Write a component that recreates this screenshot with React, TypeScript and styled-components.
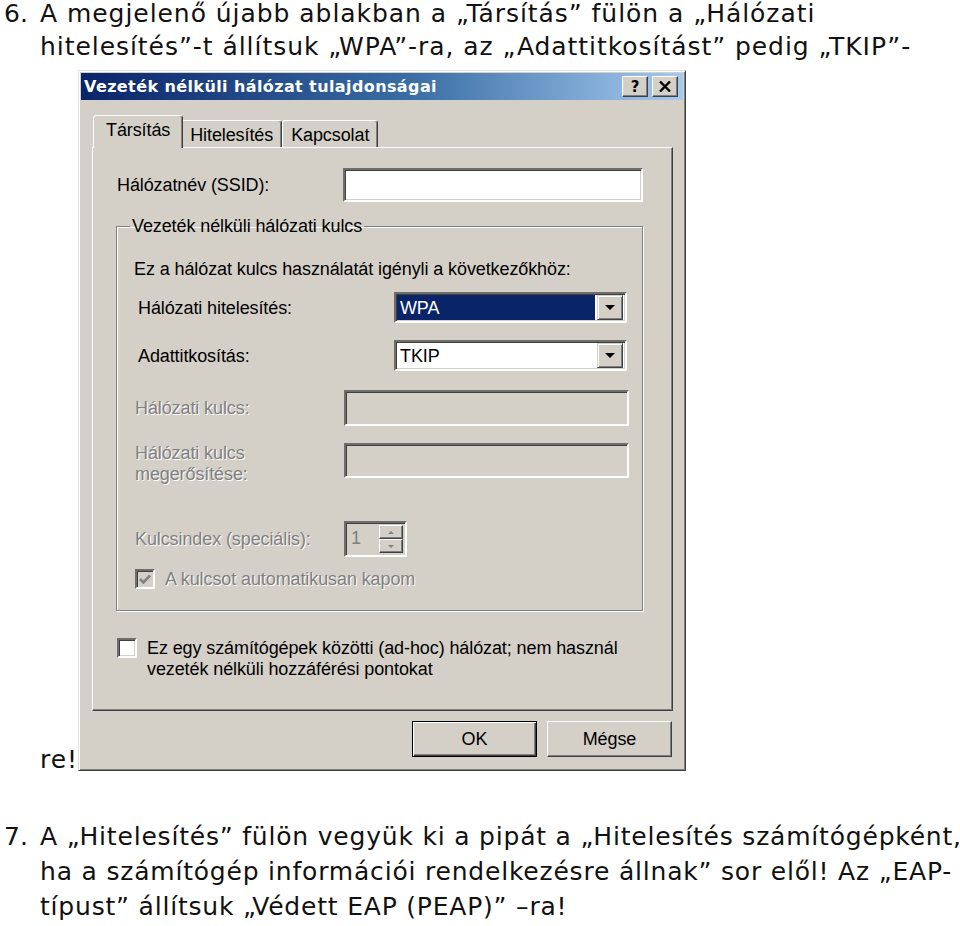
import styled, { createGlobalStyle } from "styled-components";

const GlobalStyle = createGlobalStyle`
  html, body {
    margin: 0;
    padding: 0;
    background: #fff;
  }
  body {
    font-family: "DejaVu Sans", Verdana, sans-serif;
    color: #111;
  }
`;

const Page = styled.div`
  width: 960px;
  padding: 0 0 0 4px;
  box-sizing: border-box;
`;

const Step = styled.div<{ $top?: number; $lh?: number; $ls?: number }>`
  display: flex;
  margin-top: ${(p) => p.$top ?? 0}px;
  font-size: 25px;
  letter-spacing: ${(p) => p.$ls ?? 0.8}px;
  line-height: ${(p) => p.$lh ?? 33}px;
  white-space: nowrap;
`;

const StepNum = styled.div`
  width: 36px;
  flex: none;
  letter-spacing: 0;
`;

const StepText = styled.div``;

/* ---- the dialog picture ---- */

const Dialog = styled.div`
  display: inline-block;
  vertical-align: -3px;
  overflow: hidden;
  margin: 7px 0 0 0;
  width: 608px;
  height: 701px;
  box-sizing: border-box;
  background: #d4d0c8;
  border: 1px solid;
  border-color: #e4e2dc #404040 #404040 #e4e2dc;
  box-shadow: inset 1px 1px #fff, inset -1px -1px #808080;
  padding: 2px;
  font-family: "Liberation Sans", Arial, sans-serif;
  font-size: 18px;
  letter-spacing: -0.1px;
  line-height: 20px;
  color: #000;
  white-space: normal;
`;

const TitleBar = styled.div`
  display: flex;
  align-items: center;
  justify-content: space-between;
  height: 27px;
  padding: 0 5px 0 3px;
  background: linear-gradient(to right, #0a246a 0%, #3a6ea5 55%, #a6caf0 100%);
`;

const TitleText = styled.div`
  color: #fff;
  font-family: "DejaVu Sans", Verdana, sans-serif;
  font-weight: 700;
  font-size: 16px;
  letter-spacing: 0.4px;
`;

const TitleButtons = styled.div`
  display: flex;
  gap: 4px;
`;

const TitleButton = styled.div`
  width: 26px;
  height: 21px;
  box-sizing: border-box;
  display: flex;
  align-items: center;
  justify-content: center;
  background: #d4d0c8;
  border: 1px solid;
  border-color: #fff #404040 #404040 #fff;
  box-shadow: inset -1px -1px #808080;
  font-family: "DejaVu Sans", sans-serif;
  font-weight: 700;
  font-size: 15px;
  color: #000;
`;

const Body = styled.div`
  padding: 15px 10px 0 11px;
`;

const TabRow = styled.div`
  display: flex;
  align-items: flex-end;
  height: 32px;
  padding-left: 3px;
  position: relative;
  z-index: 1;
`;

const Tab = styled.div<{ $active?: boolean }>`
  display: flex;
  align-items: center;
  box-sizing: border-box;
  height: ${(p) => (p.$active ? 33 : 27)}px;
  margin: ${(p) => (p.$active ? "0 -2px -1px -2px" : "0")};
  padding: ${(p) => (p.$active ? "0 12px 4px 12px" : "2px 8px 0 8px")};
  background: #d4d0c8;
  border: 1px solid;
  border-bottom: none;
  border-color: #fff #404040 transparent #fff;
  box-shadow: inset -1px 0 #808080;
  border-radius: 3px 3px 0 0;
  ${(p) => p.$active && "z-index: 2;"}
`;

const Panel = styled.div`
  height: 564px;
  box-sizing: border-box;
  border: 1px solid;
  border-color: #fff #404040 #404040 #fff;
  box-shadow: inset -1px -1px #808080;
  padding: 20px 0 0 24px;
`;

const Row = styled.div<{ $mt?: number; $pl?: number; $top?: boolean }>`
  display: flex;
  align-items: ${(p) => (p.$top ? "flex-start" : "center")};
  margin-top: ${(p) => p.$mt ?? 0}px;
  padding-left: ${(p) => p.$pl ?? 0}px;
`;

const Label = styled.div<{ $w?: number; $disabled?: boolean; $lh?: number }>`
  width: ${(p) => (p.$w ? `${p.$w}px` : "auto")};
  flex: none;
  line-height: ${(p) => p.$lh ?? 20}px;
  color: ${(p) => (p.$disabled ? "#808080" : "#000")};
  text-shadow: ${(p) => (p.$disabled ? "1px 1px 0 #fff" : "none")};
`;

const TextField = styled.div<{ $w: number; $h: number; $disabled?: boolean }>`
  width: ${(p) => p.$w}px;
  height: ${(p) => p.$h}px;
  box-sizing: border-box;
  background: ${(p) => (p.$disabled ? "#d4d0c8" : "#fff")};
  border: 2px solid;
  border-color: #6e6d69 #fff #fff #6e6d69;
  box-shadow: inset 1px 1px #404040, inset -1px -1px #d4d0c8;
`;

const GroupBox = styled.fieldset`
  width: 527px;
  box-sizing: border-box;
  margin: 15px 0 0 -1px;
  padding: 0 0 21px 0;
  border: 1px solid #808080;
  box-shadow: inset 1px 1px #fff, 1px 1px #fff;
  min-width: 0;
`;

const GroupLegend = styled.legend`
  margin-left: 13px;
  padding: 0 2px;
  line-height: 18px;
`;

const Heading = styled.div`
  margin-top: 24px;
  padding-left: 17px;
`;

const Combo = styled.div`
  display: flex;
  align-items: center;
  width: 233px;
  height: 31px;
  box-sizing: border-box;
  padding: 1px 2px 1px 1px;
  background: #fff;
  border: 2px solid;
  border-color: #6e6d69 #fff #fff #6e6d69;
  box-shadow: inset 1px 1px #404040, inset -1px -1px #d4d0c8;
`;

const ComboValue = styled.div<{ $selected?: boolean }>`
  flex: 1;
  align-self: stretch;
  display: flex;
  align-items: center;
  padding-left: 3px;
  margin-right: 2px;
  background: ${(p) => (p.$selected ? "#0a246a" : "#fff")};
  color: ${(p) => (p.$selected ? "#fff" : "#000")};
`;

const DropButton = styled.div`
  width: 26px;
  align-self: stretch;
  box-sizing: border-box;
  display: flex;
  align-items: center;
  justify-content: center;
  background: #d4d0c8;
  border: 1px solid;
  border-color: #d4d0c8 #404040 #404040 #d4d0c8;
  box-shadow: inset 1px 1px #fff, inset -1px -1px #808080;
`;

const Spinner = styled.div`
  display: flex;
  width: 63px;
  height: 36px;
  box-sizing: border-box;
  border: 2px solid;
  border-color: #6e6d69 #fff #fff #6e6d69;
  box-shadow: inset 1px 1px #404040, inset -1px -1px #d4d0c8;
  padding: 2px 2px 2px 3px;
`;

const SpinValue = styled.div`
  flex: 1;
  color: #808080;
  line-height: 26px;
  padding-left: 2px;
`;

const SpinButtons = styled.div`
  display: flex;
  flex-direction: column;
  width: 24px;
`;

const SpinButton = styled.div`
  flex: 1;
  display: flex;
  align-items: center;
  justify-content: center;
  background: #d4d0c8;
  border: 1px solid;
  border-color: #fff #404040 #404040 #fff;
  box-shadow: inset -1px -1px #808080;
`;

const Check = styled.div<{ $disabled?: boolean }>`
  width: 20px;
  height: 20px;
  flex: none;
  box-sizing: border-box;
  display: flex;
  align-items: center;
  justify-content: center;
  background: ${(p) => (p.$disabled ? "#d4d0c8" : "#fff")};
  border: 2px solid;
  border-color: #6e6d69 #fff #fff #6e6d69;
  box-shadow: inset 1px 1px #404040, inset -1px -1px #d4d0c8;
`;

const CheckText = styled(Label)`
  margin-left: 10px;
`;

const ButtonRow = styled.div`
  display: flex;
  justify-content: flex-end;
  gap: 10px;
  margin-top: 10px;
  padding-right: 1px;
`;

const DialogButton = styled.div<{ $default?: boolean }>`
  width: 125px;
  height: 36px;
  box-sizing: border-box;
  display: flex;
  align-items: center;
  justify-content: center;
  background: #d4d0c8;
  border: 1px solid;
  border-color: ${(p) => (p.$default ? "#000" : "#fff #404040 #404040 #fff")};
  box-shadow: ${(p) =>
    p.$default
      ? "inset 1px 1px #fff, inset -1px -1px #404040, inset -2px -2px #808080"
      : "inset -1px -1px #808080"};
`;

const Arrow = ({ color = "#000", w = 10 }: { color?: string; w?: number }) => (
  <svg width={w} height={w / 2} viewBox="0 0 10 5">
    <polygon points="0,0 10,0 5,5" fill={color} />
  </svg>
);

const UpArrow = () => (
  <svg width="6" height="3" viewBox="0 0 6 3">
    <polygon points="0,3 6,3 3,0" fill="#808080" />
  </svg>
);

const CheckMark = () => (
  <svg width="12" height="11" viewBox="0 0 12 11">
    <polyline points="1,5 4.5,8.5 11,1.5" fill="none" stroke="#808080" strokeWidth="2.6" />
  </svg>
);

function WirelessDialog() {
  return (
    <Dialog>
      <TitleBar>
        <TitleText>Vezeték nélküli hálózat tulajdonságai</TitleText>
        <TitleButtons>
          <TitleButton>?</TitleButton>
          <TitleButton>
            <svg width="12" height="11" viewBox="0 0 12 11">
              <path d="M1 0.5 L11 10.5 M11 0.5 L1 10.5" stroke="#000" strokeWidth="2.4" />
            </svg>
          </TitleButton>
        </TitleButtons>
      </TitleBar>
      <Body>
        <TabRow>
          <Tab $active>Társítás</Tab>
          <Tab>Hitelesítés</Tab>
          <Tab>Kapcsolat</Tab>
        </TabRow>
        <Panel>
          <Row>
            <Label $w={226}>Hálózatnév (SSID):</Label>
            <TextField $w={300} $h={34} />
          </Row>

          <GroupBox>
            <GroupLegend>Vezeték nélküli hálózati kulcs</GroupLegend>
            <Heading>Ez a hálózat kulcs használatát igényli a következőkhöz:</Heading>

            <Row $mt={13} $pl={21}>
              <Label $w={256}>Hálózati hitelesítés:</Label>
              <Combo>
                <ComboValue $selected>WPA</ComboValue>
                <DropButton>
                  <Arrow />
                </DropButton>
              </Combo>
            </Row>
            <Row $mt={17} $pl={21}>
              <Label $w={256}>Adattitkosítás:</Label>
              <Combo>
                <ComboValue>TKIP</ComboValue>
                <DropButton>
                  <Arrow />
                </DropButton>
              </Combo>
            </Row>

            <Row $mt={19} $pl={18}>
              <Label $w={209} $disabled>
                Hálózati kulcs:
              </Label>
              <TextField $w={285} $h={36} $disabled />
            </Row>
            <Row $mt={17} $pl={18} $top>
              <Label $w={209} $disabled $lh={21}>
                Hálózati kulcs
                <br />
                megerősítése:
              </Label>
              <TextField $w={285} $h={35} $disabled />
            </Row>

            <Row $mt={36} $pl={18}>
              <Label $w={209} $disabled>
                Kulcsindex (speciális):
              </Label>
              <Spinner>
                <SpinValue>1</SpinValue>
                <SpinButtons>
                  <SpinButton>
                    <UpArrow />
                  </SpinButton>
                  <SpinButton>
                    <Arrow color="#808080" w={6} />
                  </SpinButton>
                </SpinButtons>
              </Spinner>
            </Row>
            <Row $mt={12} $pl={18}>
              <Check $disabled>
                <CheckMark />
              </Check>
              <CheckText $disabled>A kulcsot automatikusan kapom</CheckText>
            </Row>
          </GroupBox>

          <Row $mt={27} $top>
            <Check />
            <CheckText $lh={21}>
              Ez egy számítógépek közötti (ad-hoc) hálózat; nem használ
              <br />
              vezeték nélküli hozzáférési pontokat
            </CheckText>
          </Row>
        </Panel>
        <ButtonRow>
          <DialogButton $default>OK</DialogButton>
          <DialogButton>Mégse</DialogButton>
        </ButtonRow>
      </Body>
    </Dialog>
  );
}

export default function App() {
  return (
    <>
      <GlobalStyle />
      <Page>
        <Step $top={-3} $ls={0.95}>
          <StepNum>6.</StepNum>
          <StepText>
            A megjelenő újabb ablakban a „Társítás” fülön a „Hálózati
            <br />
            hitelesítés”-t állítsuk „WPA”-ra, az „Adattitkosítást” pedig „TKIP”-
            <br />
            re!<WirelessDialog />
          </StepText>
        </Step>
        <Step $top={43} $lh={35}>
          <StepNum>7.</StepNum>
          <StepText>
            A „Hitelesítés” fülön vegyük ki a pipát a „Hitelesítés számítógépként,
            <br />
            ha a számítógép információi rendelkezésre állnak” sor elől! Az „EAP-
            <br />
            típust” állítsuk „Védett EAP (PEAP)” –ra!
          </StepText>
        </Step>
      </Page>
    </>
  );
}
